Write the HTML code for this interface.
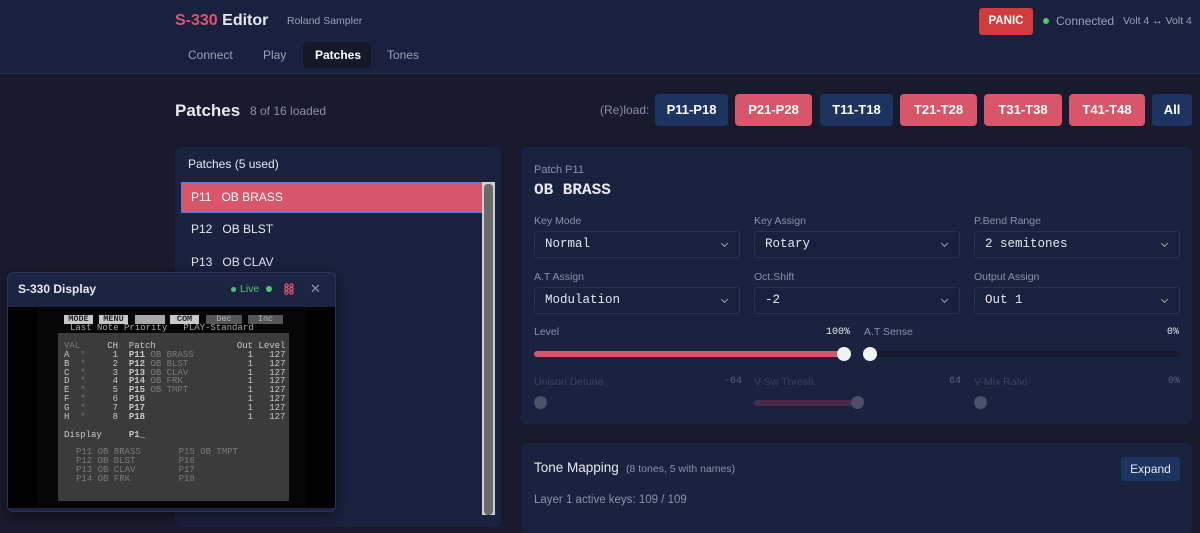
<!DOCTYPE html>
<html><head><meta charset="utf-8"><style>
*{box-sizing:border-box;margin:0;padding:0}
body{width:1200px;height:515px;overflow:hidden;background:#1a1a2e;font-family:"Liberation Sans",sans-serif;position:relative;color:#e8e8f0}
.a{position:absolute;white-space:nowrap}
.hdr{left:0;top:0;width:1200px;height:74px;background:#1a2140;border-bottom:1px solid #232c50}
.btn{position:absolute;top:94px;height:32px;border-radius:4px;font-size:13px;font-weight:bold;color:#fff;text-align:center;line-height:32px}
.bl{background:#1d3461}.rd{background:#d9566a}
.pan{position:absolute;background:#1a2240;border-radius:6px}
.lbl{position:absolute;font-size:10.5px;color:#8a90a8;white-space:nowrap}
.sel{position:absolute;height:27px;width:206px;border:1px solid #263052;border-radius:3px;background:#19203d;font-family:"Liberation Mono",monospace;font-size:12.5px;color:#e8e8f0;line-height:25px;padding-left:10px}
.sel:after{content:"";position:absolute;right:12px;top:9px;width:4px;height:4px;border-right:1px solid #9aa;border-bottom:1px solid #9aa;transform:rotate(45deg)}
.mono{font-family:"Liberation Mono",monospace}
.lcd{font-family:"Liberation Mono",monospace;font-size:9px;line-height:8.86px;position:absolute;white-space:pre;color:#c8c8c8}
.dim{color:#7a7a7a}
.mb{position:absolute;top:315px;height:9px;font-family:"Liberation Mono",monospace;font-size:8.5px;line-height:9px;text-align:center;font-weight:bold;color:#222}
</style></head><body>
<div class="a hdr"></div>
<div class="a" style="left:175px;top:12px;font-size:16px;font-weight:bold"><span style="color:#e05468">S-330</span> Editor</div>
<div class="a" style="left:287px;top:15px;font-size:10.5px;color:#9aa0b5">Roland Sampler</div>
<div class="a" style="left:303px;top:42px;width:68px;height:26px;background:#141827;border-radius:4px"></div>
<div class="a" style="left:188px;top:48px;font-size:12px;color:#9aa0b5">Connect</div>
<div class="a" style="left:263px;top:48px;font-size:12px;color:#9aa0b5">Play</div>
<div class="a" style="left:315px;top:48px;font-size:12px;color:#fff;font-weight:bold">Patches</div>
<div class="a" style="left:387px;top:48px;font-size:12px;color:#9aa0b5">Tones</div>
<div class="a" style="left:979px;top:8px;width:54px;height:27px;background:#d23b3b;border-radius:3px;font-size:11.5px;font-weight:bold;color:#fff;text-align:center;line-height:27px">PANIC</div>
<div class="a" style="left:1043px;top:18px;width:6px;height:6px;border-radius:50%;background:#4cc96a"></div>
<div class="a" style="left:1056px;top:14px;font-size:12px;color:#9aa0b5">Connected</div>
<div class="a" style="left:1123px;top:15px;font-size:10.5px;color:#9aa0b5">Volt 4 ↔ Volt 4</div>

<div class="a" style="left:175px;top:101px;font-size:17px;font-weight:bold">Patches</div>
<div class="a" style="left:250px;top:104px;font-size:12px;color:#8a90a8">8 of 16 loaded</div>
<div class="a" style="left:600px;top:103px;font-size:12px;color:#8a90a8">(Re)load:</div>
<div class="btn bl" style="left:655px;width:73px">P11-P18</div>
<div class="btn rd" style="left:735px;width:77px">P21-P28</div>
<div class="btn bl" style="left:820px;width:73px">T11-T18</div>
<div class="btn rd" style="left:900px;width:77px">T21-T28</div>
<div class="btn rd" style="left:984px;width:78px">T31-T38</div>
<div class="btn rd" style="left:1069px;width:76px">T41-T48</div>
<div class="btn bl" style="left:1152px;width:40px">All</div>

<div class="pan" style="left:175px;top:147px;width:326px;height:380px"></div>
<div class="a" style="left:188px;top:157px;font-size:12px">Patches (5 used)</div>
<div class="a" style="left:181px;top:182px;width:303px;height:31px;background:#d9566a;border:1px solid #5b7bd0;border-right:none"></div>
<div class="a" style="left:191px;top:190px;font-size:12px;color:#fff">P11&nbsp;&nbsp;&nbsp;OB BRASS</div>
<div class="a" style="left:191px;top:222px;font-size:12px;color:#e8e8f0">P12&nbsp;&nbsp;&nbsp;OB BLST</div>
<div class="a" style="left:191px;top:255px;font-size:12px;color:#e8e8f0">P13&nbsp;&nbsp;&nbsp;OB CLAV</div>
<div class="a" style="left:482px;top:182px;width:13px;height:333px;background:#d0d0d0"></div>
<div class="a" style="left:484px;top:184px;width:9px;height:331px;background:#6b6b6b;border-radius:4px"></div>

<div class="pan" style="left:521px;top:147px;width:671px;height:277px"></div>
<div class="a" style="left:534px;top:164px;font-size:11px;color:#8a90a8">Patch P11</div>
<div class="a mono" style="left:534px;top:181px;font-size:16px;font-weight:bold">OB BRASS</div>
<div class="lbl" style="left:534px;top:215px">Key Mode</div>
<div class="lbl" style="left:754px;top:215px">Key Assign</div>
<div class="lbl" style="left:974px;top:215px">P.Bend Range</div>
<div class="sel" style="left:534px;top:231px">Normal</div>
<div class="sel" style="left:754px;top:231px">Rotary</div>
<div class="sel" style="left:974px;top:231px">2 semitones</div>
<div class="lbl" style="left:534px;top:271px">A.T Assign</div>
<div class="lbl" style="left:754px;top:271px">Oct.Shift</div>
<div class="lbl" style="left:974px;top:271px">Output Assign</div>
<div class="sel" style="left:534px;top:287px">Modulation</div>
<div class="sel" style="left:754px;top:287px">-2</div>
<div class="sel" style="left:974px;top:287px">Out 1</div>
<div class="lbl" style="left:534px;top:326px">Level</div>
<div class="a mono" style="left:826px;top:327px;font-size:10px;color:#e8e8f0">100%</div>
<div class="lbl" style="left:864px;top:326px">A.T Sense</div>
<div class="a mono" style="left:1167px;top:327px;font-size:10px;color:#e8e8f0">0%</div>
<div class="a" style="left:534px;top:351px;width:312px;height:6px;background:#d9566a;border-radius:3px"></div>
<div class="a" style="left:837px;top:347px;width:14px;height:14px;border-radius:50%;background:#f2f2f2"></div>
<div class="a" style="left:864px;top:351px;width:316px;height:6px;background:#171a2e;border-radius:3px"></div>
<div class="a" style="left:863px;top:347px;width:14px;height:14px;border-radius:50%;background:#f2f2f2"></div>
<div class="lbl" style="left:534px;top:376px;color:#3a4260">Unison Detune</div>
<div class="a mono" style="left:724px;top:376px;font-size:10px;color:#5a6078">-64</div>
<div class="lbl" style="left:754px;top:376px;color:#3a4260">V-Sw Thresh.</div>
<div class="a mono" style="left:949px;top:376px;font-size:10px;color:#5a6078">64</div>
<div class="lbl" style="left:974px;top:376px;color:#3a4260">V-Mix Ratio</div>
<div class="a mono" style="left:1168px;top:376px;font-size:10px;color:#5a6078">0%</div>
<div class="a" style="left:534px;top:396px;width:13px;height:13px;border-radius:50%;background:#4a5068"></div>
<div class="a" style="left:754px;top:400px;width:104px;height:6px;border-radius:3px;background:#4a2a48"></div>
<div class="a" style="left:851px;top:396px;width:13px;height:13px;border-radius:50%;background:#4a5068"></div>
<div class="a" style="left:974px;top:396px;width:13px;height:13px;border-radius:50%;background:#4a5068"></div>

<div class="pan" style="left:521px;top:443px;width:671px;height:90px"></div>
<div class="a" style="left:534px;top:460px;font-size:13.5px">Tone Mapping</div>
<div class="a" style="left:626px;top:463px;font-size:10.5px;color:#8a90a8">(8 tones, 5 with names)</div>
<div class="a" style="left:1121px;top:457px;width:59px;height:24px;background:#1d3461;border-radius:3px;font-size:12px;text-align:center;line-height:24px">Expand</div>
<div class="a" style="left:534px;top:494px;font-size:11.5px;color:#8a90a8">Layer 1 active keys: 109 / 109</div>

<div class="a" style="left:7px;top:272px;width:329px;height:240px;background:#1b2442;border:1px solid #2a3458;border-radius:6px;box-shadow:0 4px 16px rgba(0,0,0,.5)"></div>
<div class="a" style="left:18px;top:282px;font-size:12px;font-weight:bold">S-330 Display</div>
<div class="a" style="left:231px;top:287px;width:5px;height:5px;border-radius:50%;background:#4cc96a"></div>
<div class="a" style="left:240px;top:283px;font-size:10.5px;color:#4cc96a">Live</div>
<div class="a" style="left:266px;top:286px;width:6px;height:6px;border-radius:50%;background:#4cc96a"></div>
<svg class="a" style="left:284px;top:283px" width="10" height="12" viewBox="0 0 10 12"><g fill="none" stroke="#e05468" stroke-width="1.3"><circle cx="2.5" cy="2.5" r="1.6"/><circle cx="7.5" cy="2.5" r="1.6"/><circle cx="2.5" cy="6" r="1.6"/><circle cx="7.5" cy="6" r="1.6"/><circle cx="2.5" cy="9.5" r="1.6"/><circle cx="7.5" cy="9.5" r="1.6"/></g></svg>
<div class="a" style="left:310px;top:281px;font-size:13px;color:#8a90a8">✕</div>
<div class="a" style="left:8px;top:307px;width:327px;height:201px;background:#000"></div>
<div class="a" style="left:37px;top:307px;width:269px;height:201px;background:#060606"></div>
<div class="a" style="left:58px;top:333px;width:231px;height:168px;background:#3b3b3b"></div>
<div class="mb" style="left:64px;width:29px;background:#c8c8c8">MODE</div>
<div class="mb" style="left:99px;width:29px;background:#c8c8c8">MENU</div>
<div class="mb" style="left:135px;width:30px;background:#a8a8a8"></div>
<div class="mb" style="left:170px;width:29px;background:#c8c8c8">COM</div>
<div class="mb" style="left:206px;width:36px;background:#555;color:#bbb;font-weight:normal">Dec</div>
<div class="mb" style="left:248px;width:35px;background:#555;color:#bbb;font-weight:normal">Inc</div>
<div class="lcd" style="left:70px;top:324px;color:#aaa">Last Note Priority   PLAY-Standard</div>
<div class="lcd" style="left:64px;top:342px"><span class="dim">VAL</span>     CH  Patch               Out Level
A  <span class="dim">*</span>     1  <b>P11</b> <span class="dim">OB BRASS</span>          1   127
B  <span class="dim">*</span>     2  <b>P12</b> <span class="dim">OB BLST</span>           1   127
C  <span class="dim">*</span>     3  <b>P13</b> <span class="dim">OB CLAV</span>           1   127
D  <span class="dim">*</span>     4  <b>P14</b> <span class="dim">OB FRK</span>            1   127
E  <span class="dim">*</span>     5  <b>P15</b> <span class="dim">OB TMPT</span>           1   127
F  <span class="dim">*</span>     6  <b>P16</b>                   1   127
G  <span class="dim">*</span>     7  <b>P17</b>                   1   127
H  <span class="dim">*</span>     8  <b>P18</b>                   1   127

Display     <b>P1_</b>
</div>
<div class="lcd dim" style="left:76px;top:448px">P11 OB BRASS       P15 OB TMPT
P12 OB BLST        P16
P13 OB CLAV        P17
P14 OB FRK         P18</div>
</body></html>
